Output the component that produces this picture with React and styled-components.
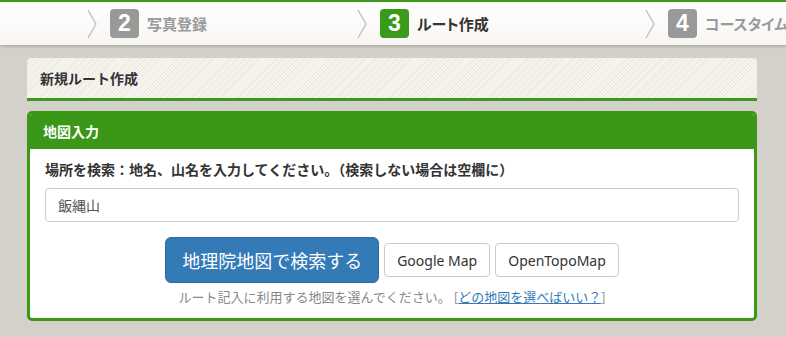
import { createGlobalStyle, styled } from "styled-components"

const GlobalStyle = createGlobalStyle`
  html, body {
    margin: 0;
    padding: 0;
    background: #d4d0ca;
    font-family: "Noto Sans", "Noto Sans CJK JP", sans-serif;
    color: #333;
  }
  * { box-sizing: border-box; }
`

const Page = styled.div`
  width: 786px;
  height: 337px;
  overflow: hidden;
`

const StepBar = styled.div`
  height: 45px;
  border-top: 2px solid #3a9a1a;
  background: linear-gradient(#ffffff, #f7f6f3);
  box-shadow: 0 1px 3px rgba(0, 0, 0, 0.25);
  display: flex;
  align-items: center;
  padding-left: 87px;
  white-space: nowrap;
  overflow: hidden;
`

const Step = styled.div`
  flex: 0 0 ${(props) => props.width}px;
  display: flex;
  align-items: center;
  height: 100%;
`

const Chevron = styled.svg`
  width: 10px;
  height: 30px;
  margin-right: 13px;
  flex: none;
`

const Badge = styled.span`
  width: 29px;
  height: 29px;
  border-radius: 4px;
  background: ${(props) => (props.active ? "#3a9a1a" : "#999")};
  color: #fff;
  font-family: "Liberation Sans", Arial, sans-serif;
  font-weight: bold;
  font-size: 23px;
  line-height: 29px;
  text-align: center;
  flex: none;
`

const StepLabel = styled.span`
  margin-left: 8px;
  font-size: 15px;
  font-weight: bold;
  color: ${(props) => (props.active ? "#333" : "#9a9a9a")};
  font-family: "Noto Sans CJK JP", sans-serif;
  font-feature-settings: "palt";
`

const Container = styled.div`
  width: 730px;
  margin-left: 27px;
`

const TitlePanel = styled.div`
  margin-top: 13px;
  height: 43px;
  border-radius: 4px 4px 0 0;
  border-bottom: 3px solid #3a9a1a;
  background: repeating-linear-gradient(
    135deg,
    #f8f6f1 0px,
    #f8f6f1 1.5px,
    #ece8e0 1.5px,
    #ece8e0 2.5px
  );
  display: flex;
  align-items: center;
  padding-left: 13px;
  font-size: 14px;
  font-weight: bold;
  color: #333;
  font-family: "Noto Sans CJK JP", sans-serif;
`

const Card = styled.div`
  margin-top: 10px;
  border: 3px solid #3a9718;
  border-radius: 5px;
  background: #fff;
  overflow: hidden;
`

const CardHeader = styled.div`
  height: 36px;
  background: #3a9718;
  color: #fff;
  font-size: 14px;
  font-weight: bold;
  display: flex;
  align-items: center;
  padding-left: 13px;
  margin-top: -1px;
  font-family: "Noto Sans CJK JP", sans-serif;
`

const CardBody = styled.div`
  padding: 10px 15px 12px;
`

const Label = styled.div`
  font-size: 14px;
  font-weight: bold;
  line-height: 20px;
  color: #333;
  margin-bottom: 9px;
  font-family: "Noto Sans CJK JP", sans-serif;
`

const Input = styled.input`
  display: block;
  width: 100%;
  height: 34px;
  padding: 6px 12px;
  font-size: 14px;
  color: #555;
  border: 1px solid #ccc;
  border-radius: 4px;
  font-family: "Noto Sans CJK JP", sans-serif;
  outline: none;
`

const ButtonRow = styled.div`
  display: flex;
  justify-content: center;
  align-items: center;
  gap: 5px;
  margin-top: 15px;
`

const Button = styled.button`
  height: ${(props) => (props.large ? 46 : 34)}px;
  padding: ${(props) => (props.large ? "0 16px" : "0 12px")};
  font-size: ${(props) => (props.large ? 18 : 14)}px;
  border-radius: ${(props) => (props.large ? 6 : 4)}px;
  border: 1px solid ${(props) => (props.large ? "#2e6da4" : "#ccc")};
  background: ${(props) => (props.large ? "#337ab7" : "#fff")};
  color: ${(props) => (props.large ? "#fff" : "#333")};
  font-family: "Noto Sans", "Noto Sans CJK JP", sans-serif;
  cursor: pointer;
`

const Note = styled.p`
  margin: 5px 0 0;
  text-align: center;
  font-size: 13px;
  line-height: 18px;
  color: #888;
  font-family: "Noto Sans CJK JP", sans-serif;

  a {
    color: #337ab7;
    text-decoration: underline;
  }
`

function StepItem({ num, label, width, active }) {
  return (
    <Step width={width}>
      <Chevron viewBox="0 0 10 30">
        <polyline points="1,1 9,15 1,29" fill="none" stroke="#bdbdbd" strokeWidth="1.3" />
      </Chevron>
      <Badge active={active}>{num}</Badge>
      <StepLabel active={active}>{label}</StepLabel>
    </Step>
  )
}

export default function App() {
  return (
    <Page>
      <GlobalStyle />
      <StepBar>
        <StepItem num="2" label="写真登録" width={270} />
        <StepItem num="3" label="ルート作成" width={288} active />
        <StepItem num="4" label="コースタイム・標高確認" width={300} />
      </StepBar>
      <Container>
        <TitlePanel>新規ルート作成</TitlePanel>
        <Card>
          <CardHeader>地図入力</CardHeader>
          <CardBody>
            <Label>場所を検索：地名、山名を入力してください。（検索しない場合は空欄に）</Label>
            <Input defaultValue="飯縄山" />
            <ButtonRow>
              <Button large>地理院地図で検索する</Button>
              <Button>Google Map</Button>
              <Button>OpenTopoMap</Button>
            </ButtonRow>
            <Note>
              ルート記入に利用する地図を選んでください。 [<a href="#">どの地図を選べばいい？</a>]
            </Note>
          </CardBody>
        </Card>
      </Container>
    </Page>
  )
}
